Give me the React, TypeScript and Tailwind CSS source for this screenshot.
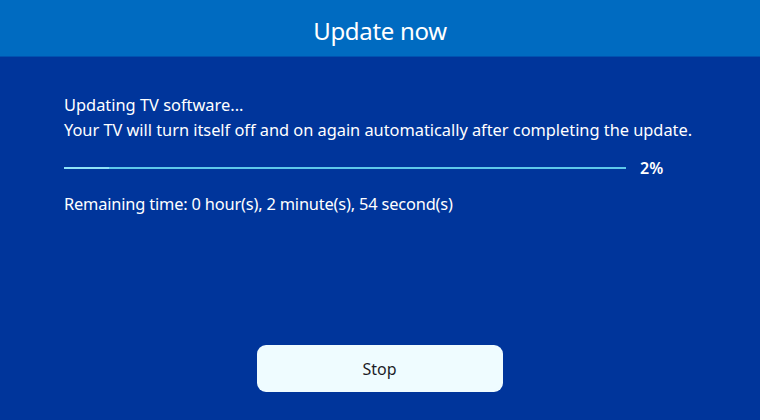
import React from "react";

export default function App() {
  const percent = 2;
  return (
    <div
      className="w-[760px] h-[420px] flex flex-col bg-[#00359b] text-white overflow-hidden"
      style={{ fontFamily: '"Noto Sans", "Open Sans", sans-serif' }}
    >
      <div className="h-[57px] shrink-0 flex items-center justify-center bg-[#006bc1] border-b border-[#0052b0]">
        <span className="text-[24px] tracking-[-0.3px] leading-none pt-[6px]">Update now</span>
      </div>
      <div className="flex-1 flex flex-col px-[64px] pt-[35px]">
        <p className="text-[16.4px] leading-[25px]">Updating TV software...</p>
        <p className="text-[16.4px] leading-[25px] tracking-[-0.03px]">
          Your TV will turn itself off and on again automatically after completing the update.
        </p>
        <div className="flex items-center mt-[15px] h-[22px]">
          <div className="w-[562px] h-[2px] bg-[#5ec8ea] flex">
            <div className="h-full bg-[#8fe3f7]" style={{ width: `${percent * 4}%` }} />
          </div>
          <span className="ml-[14px] text-[16px] font-semibold">{percent}%</span>
        </div>
        <p className="mt-[12px] text-[16.4px] leading-[25px] tracking-[-0.18px]">
          Remaining time: 0 hour(s), 2 minute(s), 54 second(s)
        </p>
        <div className="flex-1" />
        <div className="flex justify-center pb-[28px]">
          <button className="w-[246px] h-[47px] ml-[-1px] rounded-[9px] bg-[#effcff] text-[#1c1c28] text-[16px]">
            Stop
          </button>
        </div>
      </div>
    </div>
  );
}
